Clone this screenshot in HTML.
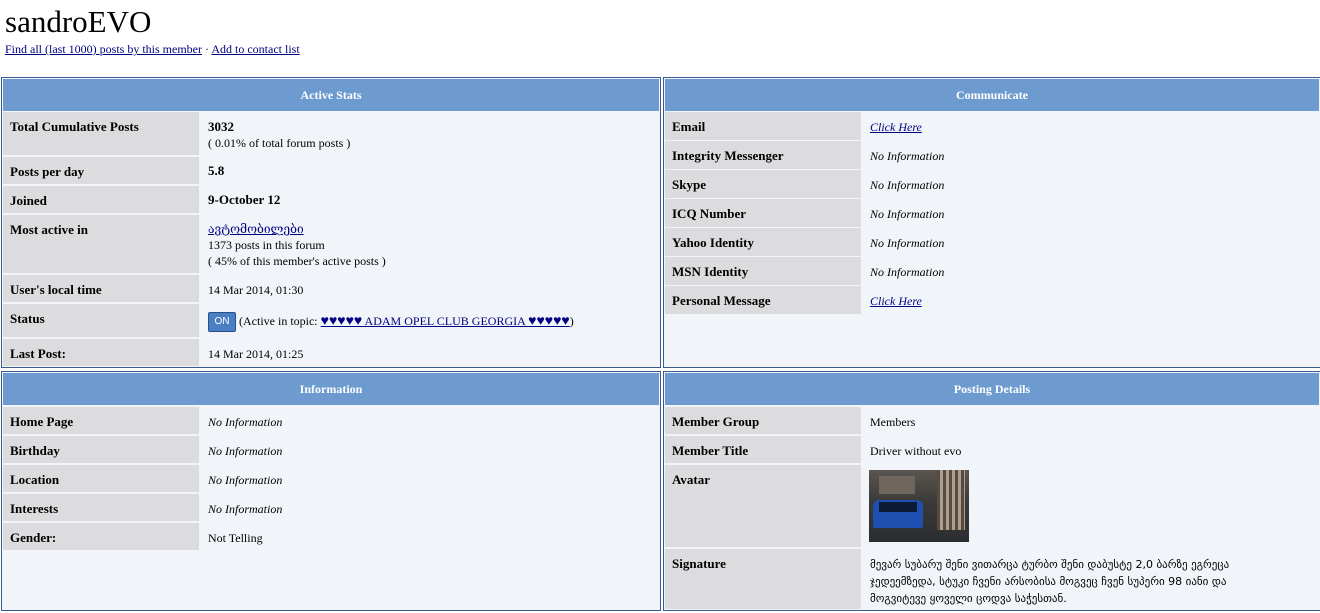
<!DOCTYPE html>
<html><head><meta charset="utf-8"><style>
body{margin:0;width:1320px;height:613px;background:#fff;font-family:"Liberation Serif","DejaVu Serif",serif;color:#000;position:relative;overflow:hidden}
h1{position:absolute;left:5px;top:4px;margin:0;font-size:31px;font-weight:normal;line-height:36px}
.links{position:absolute;left:5px;top:42px;font-size:12px}
a{color:#000080}
.box{position:absolute;border:1px solid #3b5b8f;background:#f1f4f9}
.hd{position:absolute;left:1px;right:1px;height:32px;background:#6d9bd0;color:#fff;font-weight:bold;font-size:12px;text-align:center;line-height:33px}
.l{position:absolute;left:1px;background:#dcdcdf;font-weight:bold;font-size:13px;padding:7px 0 0 7px;box-sizing:border-box}
.v{position:absolute;font-size:12px;padding:7px 0 0 7px;box-sizing:border-box;line-height:16px}
.i{font-style:italic}
</style></head><body>
<h1>sandroEVO</h1>
<div class="links"><a href="#">Find all (last 1000) posts by this member</a> · <a href="#">Add to contact list</a></div>

<div class="box" style="left:1px;top:77px;width:658px;height:289px">
<div class="hd" style="top:1px">Active Stats</div>
<div class="l" style="top:34px;height:43px;width:196px">Total Cumulative Posts</div>
<div class="v" style="top:34px;left:199px"><b style="font-size:13px">3032</b><br>( 0.01% of total forum posts )</div>
<div class="l" style="top:79px;height:27px;width:196px">Posts per day</div>
<div class="v" style="top:78px;left:199px"><b style="font-size:13px">5.8</b></div>
<div class="l" style="top:108px;height:27px;width:196px">Joined</div>
<div class="v" style="top:107px;left:199px"><b style="font-size:13px">9-October 12</b></div>
<div class="l" style="top:137px;height:58px;width:196px">Most active in</div>
<div class="v" style="top:136px;left:199px"><a href="#">ავტომობილები</a><br>1373 posts in this forum<br>( 45% of this member's active posts )</div>
<div class="l" style="top:197px;height:27px;width:196px">User's local time</div>
<div class="v" style="top:197px;left:199px">14 Mar 2014, 01:30</div>
<div class="l" style="top:226px;height:33px;width:196px">Status</div>
<div class="v" style="top:226px;left:199px;padding-top:8px"><span style="display:inline-block;width:26px;height:18px;background:#4a7fc4;color:#fff;border:1px solid #2a4f88;border-radius:2px;text-align:center;font-family:'Liberation Sans',sans-serif;font-size:10px;line-height:18px;vertical-align:middle">ON</span> (Active in topic: <a href="#"><span style="font-size:14px">♥♥♥♥♥</span> ADAM OPEL CLUB GEORGIA <span style="font-size:14px">♥♥♥♥♥</span></a>)</div>
<div class="l" style="top:261px;height:27px;width:196px">Last Post:</div>
<div class="v" style="top:261px;left:199px">14 Mar 2014, 01:25</div>
</div>

<div class="box" style="left:663px;top:77px;width:656px;height:289px">
<div class="hd" style="top:1px">Communicate</div>
<div class="l" style="top:34px;height:28px;width:196px">Email</div><div class="v i" style="top:34px;left:199px"><a href="#">Click Here</a></div>
<div class="l" style="top:63px;height:28px;width:196px">Integrity Messenger</div><div class="v i" style="top:63px;left:199px">No Information</div>
<div class="l" style="top:92px;height:28px;width:196px">Skype</div><div class="v i" style="top:92px;left:199px">No Information</div>
<div class="l" style="top:121px;height:28px;width:196px">ICQ Number</div><div class="v i" style="top:121px;left:199px">No Information</div>
<div class="l" style="top:150px;height:28px;width:196px">Yahoo Identity</div><div class="v i" style="top:150px;left:199px">No Information</div>
<div class="l" style="top:179px;height:28px;width:196px">MSN Identity</div><div class="v i" style="top:179px;left:199px">No Information</div>
<div class="l" style="top:208px;height:28px;width:196px">Personal Message</div><div class="v i" style="top:208px;left:199px"><a href="#">Click Here</a></div>
</div>

<div class="box" style="left:1px;top:371px;width:658px;height:238px">
<div class="hd" style="top:1px">Information</div>
<div class="l" style="top:35px;height:27px;width:196px">Home Page</div><div class="v i" style="top:35px;left:199px">No Information</div>
<div class="l" style="top:64px;height:27px;width:196px">Birthday</div><div class="v i" style="top:64px;left:199px">No Information</div>
<div class="l" style="top:93px;height:27px;width:196px">Location</div><div class="v i" style="top:93px;left:199px">No Information</div>
<div class="l" style="top:122px;height:27px;width:196px">Interests</div><div class="v i" style="top:122px;left:199px">No Information</div>
<div class="l" style="top:151px;height:27px;width:196px">Gender:</div><div class="v" style="top:151px;left:199px">Not Telling</div>
</div>

<div class="box" style="left:663px;top:371px;width:656px;height:238px">
<div class="hd" style="top:1px">Posting Details</div>
<div class="l" style="top:35px;height:27px;width:196px">Member Group</div><div class="v" style="top:35px;left:199px">Members</div>
<div class="l" style="top:64px;height:27px;width:196px">Member Title</div><div class="v" style="top:64px;left:199px">Driver without evo</div>
<div class="l" style="top:93px;height:82px;width:196px">Avatar</div>
<div style="position:absolute;top:98px;left:205px;width:100px;height:72px;background:linear-gradient(180deg,#5a5550 0%,#3b3a38 45%,#2b2d30 100%)">
<div style="position:absolute;left:10px;top:6px;width:36px;height:18px;background:#6f665d"></div>
<div style="position:absolute;right:4px;top:0;width:28px;height:60px;background:repeating-linear-gradient(90deg,#5b4a3c 0 3px,#a89f95 3px 6px)"></div>
<div style="position:absolute;left:4px;top:30px;width:50px;height:28px;background:#1f4fb0;border-radius:6px 6px 2px 2px"></div>
<div style="position:absolute;left:10px;top:32px;width:38px;height:10px;background:#0d1a33"></div>
</div>
<div class="l" style="top:177px;height:60px;width:196px">Signature</div>
<div class="v" style="top:177px;left:199px;width:400px;font-family:'DejaVu Sans',sans-serif;font-size:11px;line-height:17px">მევარ სუბარუ შენი ვითარცა ტურბო შენი დაბუსტე 2,0 ბარზე ეგრეცა ჯედეემზედა, სტუკი ჩვენი არსობისა მოგვეც ჩვენ სუპერი 98 იანი და მოგვიტევე ყოველი ცოდვა საჭესთან.</div>
</div>
</body></html>
